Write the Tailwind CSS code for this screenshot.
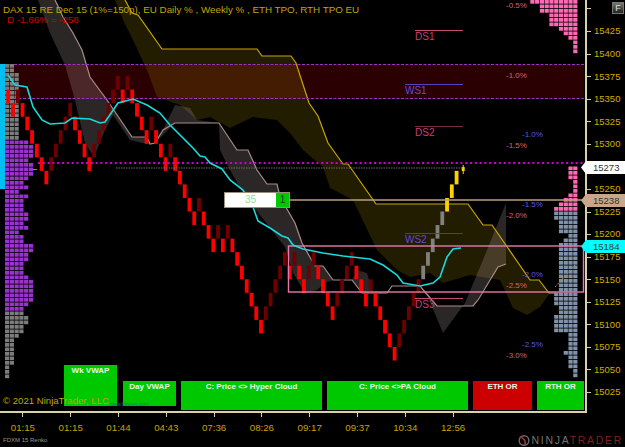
<!DOCTYPE html>
<html lang="en">
<head>
    <meta charset="UTF-8">
    <title>DAX 15 RE Dec 15</title>
    <script src="https://cdn.jsdelivr.net/npm/@tailwindcss/browser@4"></script>
</head>
<body class="bg-black">
    <div class="w-[625px] h-[447px] flex flex-col bg-black overflow-hidden font-['Liberation_Sans',Arial,sans-serif]">
        <div class="relative flex h-[413px] shrink-0">
            <!-- chart canvas -->
            <div class="relative w-[587px] h-[413px] shrink-0 border-r-[2px] border-b-[2px] border-[#d8d2a8]">
                <svg id="chart" class="absolute left-0 top-0" width="585" height="411" viewBox="0 0 585 411">
                    <rect x="5" y="64.5" width="579" height="34" fill="#2a0003" />
                    <polygon fill="#c8a800" fill-opacity="0.17" points="115,0 125,0 132,13 138,15 162,49 257,49 262,56 291,56 296,63 309,103 318,116 328,143 333,150 343,164 348,164 376,204 468,204 483,225 492,225 530,280 539,280 549,293 555,293 550,293 540,307 527,315 513,308 500,280 470,275 443,283 430,273 410,277 397,270 377,250 353,200 330,188 323,167 303,150 290,133 277,120 253,117 230,128 210,117 197,120 180,105 157,97 147,70 133,40 123,20" />
                    <g fill="#c8b0b0" fill-opacity="0.22">
                        <polygon points="38,0 55,0 63,17 73,33 82,50 90,77 107,100 132,137 147,137 150,144 143,143 130,140 113,115 105,130 94,157 85,143 75,100 65,65 50,33" />
                        <polygon points="155,143 163,130 175,105 190,108 197,120 219,123 175,123" />
                        <polygon points="219,123 237,150 248,150 257,170 267,184 277,184 280,197 295,223 302,243 315,266 323,266 333,280 325,283 317,290 305,293 293,273 285,247 243,193 230,170 220,150" />
                        <polygon points="352,280 357,270 367,273 373,293 362,293" />
                        <polygon points="425,290 437,306 473,306 498,267 506,264 506,203 485,255 465,303 443,333" />
                    </g>
                    <polyline fill="none" stroke="#c8a800" stroke-width="1.2" points="125,0 132,13 138,15 162,49 257,49 262,56 291,56 296,63 309,103 318,116 328,143 333,150 343,164 348,164 376,204 468,204 483,225 492,225 530,280 539,280 549,293 555,293" />
                    <polyline fill="none" stroke="#a88c8c" stroke-width="1.2" points="55,0 63,17 73,33 82,50 90,77 107,100 132,137 147,137 150,144 155,143 163,130 175,123 219,123 237,150 248,150 257,170 267,184 277,184 280,197 295,223 302,243 315,266 323,266 333,280 352,280 362,293 387,293 392,286 420,286 425,292 437,306 473,306 478,300 498,267 506,264" />
                    <line x1="5" y1="64.5" x2="584" y2="64.5" stroke="#a030c0" stroke-dasharray="3 1.5" />
                    <line x1="5" y1="98.5" x2="584" y2="98.5" stroke="#a030c0" stroke-dasharray="3 1.5" />
                    <g id="profiles"></g>
                    <g id="candles"></g>
                    <line x1="38" y1="163" x2="584" y2="163" stroke="#cc00cc" stroke-width="2" stroke-dasharray="2 2.8" />
                    <line x1="116" y1="168" x2="463" y2="168" stroke="#6a6a6a" stroke-dasharray="1.5 1" />
                    <line x1="33" y1="169.5" x2="37" y2="169.5" stroke="#a0a000" />
                    <line x1="289" y1="200" x2="584" y2="200" stroke="#b8a080" stroke-width="1.5" />
                    <rect x="288.5" y="246" width="295" height="46" fill="none" stroke="#e878a8" stroke-width="1.4" />
                    <line x1="555" y1="287" x2="575" y2="265" stroke="#a09030" stroke-dasharray="2 1.5" />
                    <polyline fill="none" stroke="#19d9dc" stroke-width="1.6" points="8,75 15,85 27,87 33,107 42,120 50,124 65,123 72,118 90,119 100,123 105,122 118,103 133,99 147,105 160,113 170,125 193,148 200,156 205,157 210,163 222,169 230,180 243,190 253,207 258,221 270,228 282,236 288,238 293,245 303,249 323,253 343,256 370,259 383,265 397,275 403,283 420,286 433,283 440,277 447,257 453,249 461,248" />
                </svg>

                <div class="absolute left-0 top-[64px] w-[5px] h-[125px] bg-[#00bff0]"></div>

                <p class="absolute left-[3px] top-[3px] text-[9.8px] leading-[13px] whitespace-nowrap text-[#c0a600]">DAX 15 RE Dec 15 (1%=150p), EU Daily % , Weekly % , ETH TPO, RTH TPO EU</p>
                <p class="absolute left-[7px] top-[13px] text-[9.8px] leading-[13px] whitespace-nowrap text-[#d40000]">D -1,66% = -258</p>

                <!-- session levels -->
                <span class="absolute left-[415px] top-[30px] w-[48px] border-t border-[#c04a7a] text-[10px] leading-[11px] text-[#d03a70]">DS1</span>
                <span class="absolute left-[405px] top-[84px] w-[58px] border-t border-[#5a3fc0] text-[10px] leading-[11px] text-[#6a48d0]">WS1</span>
                <span class="absolute left-[415px] top-[126px] w-[48px] border-t border-[#7a2a4a] text-[10px] leading-[11px] text-[#d03a70]">DS2</span>
                <span class="absolute left-[405px] top-[233px] w-[58px] border-t border-[#4a3a90] text-[10px] leading-[11px] text-[#6a48d0]">WS2</span>
                <span class="absolute left-[415px] top-[298px] w-[48px] border-t border-[#c04a7a] text-[10px] leading-[11px] text-[#d03a70]">DS3</span>

                <!-- percent levels -->
                <span class="absolute left-[506px] top-[1px] text-[8px] leading-[9px] text-[#d06478]">-0.5%</span>
                <span class="absolute left-[506px] top-[71px] text-[8px] leading-[9px] text-[#d06478]">-1.0%</span>
                <span class="absolute left-[506px] top-[141px] text-[8px] leading-[9px] text-[#d06478]">-1.5%</span>
                <span class="absolute left-[506px] top-[211px] text-[8px] leading-[9px] text-[#d06478]">-2.0%</span>
                <span class="absolute left-[506px] top-[281px] text-[8px] leading-[9px] text-[#d06478]">-2.5%</span>
                <span class="absolute left-[506px] top-[351px] text-[8px] leading-[9px] text-[#d06478]">-3.0%</span>
                <span class="absolute left-[522px] top-[130px] text-[8px] leading-[9px] text-[#5a58e0]">-1.0%</span>
                <span class="absolute left-[522px] top-[200px] text-[8px] leading-[9px] text-[#5a58e0]">-1.5%</span>
                <span class="absolute left-[522px] top-[270px] text-[8px] leading-[9px] text-[#5a58e0]">-2.0%</span>
                <span class="absolute left-[522px] top-[340px] text-[8px] leading-[9px] text-[#5a58e0]">-2.5%</span>

                <!-- position marker -->
                <div class="absolute left-[224px] top-[192px] flex h-[16px] border border-[#99907a]">
                    <span class="w-[51px] bg-white text-center text-[10px] leading-[14px] text-[#90e090]">35</span>
                    <span class="w-[13px] bg-[#00c800] text-center text-[10px] leading-[14px] text-[#104010]">1</span>
                </div>

                <!-- signal boxes -->
                <div class="absolute left-0 right-0 bottom-0 flex items-end gap-[5px] pl-[64px] text-center text-[8px] font-bold leading-[10px] text-[#e8f8e8]">
                    <div class="w-[53px] h-[41px] mb-[5px] pt-[1px] bg-[#00c800]">Wk VWAP</div>
                    <div class="ml-[1px] w-[53px] h-[25px] mb-[5px] pt-[1px] bg-[#00c800]">Day VWAP</div>
                    <div class="w-[141px] h-[29px] mb-[1px] pt-[1px] bg-[#00c800]">C: Price &lt;&gt; Hyper Cloud</div>
                    <div class="w-[141px] h-[29px] mb-[1px] pt-[1px] bg-[#00c800]">C: Price &lt;&gt;PA Cloud</div>
                    <div class="w-[59px] h-[29px] mb-[1px] pt-[1px] bg-[#cc0000]">ETH OR</div>
                    <div class="w-[47px] h-[29px] mb-[1px] pt-[1px] bg-[#00c800]">RTH OR</div>
                </div>

                <p class="absolute left-[3px] top-[395px] text-[9.6px] leading-[12px] whitespace-nowrap text-[#c0a600]">© 2021 NinjaTrader, LLC</p>
                <p class="absolute left-[110px] top-[401px] text-[5px] leading-[6px] whitespace-nowrap text-[#107090]">www.futures.com</p>
            </div>

            <!-- price axis -->
            <div class="relative flex-1 h-[412px] overflow-hidden">
                <div class="flex flex-col mt-[-2.3px] text-[9.5px] text-[#d4ac00]">
                    <div class="flex items-center gap-[3px] h-[22.57px]"><i class="block w-[4px] h-px bg-[#d8d2a8]"></i></div>
                    <div class="flex items-center gap-[3px] h-[22.57px]"><i class="block w-[4px] h-px bg-[#d8d2a8]"></i>15425</div>
                    <div class="flex items-center gap-[3px] h-[22.57px]"><i class="block w-[4px] h-px bg-[#d8d2a8]"></i>15400</div>
                    <div class="flex items-center gap-[3px] h-[22.57px]"><i class="block w-[4px] h-px bg-[#d8d2a8]"></i>15375</div>
                    <div class="flex items-center gap-[3px] h-[22.57px]"><i class="block w-[4px] h-px bg-[#d8d2a8]"></i>15350</div>
                    <div class="flex items-center gap-[3px] h-[22.57px]"><i class="block w-[4px] h-px bg-[#d8d2a8]"></i>15325</div>
                    <div class="flex items-center gap-[3px] h-[22.57px]"><i class="block w-[4px] h-px bg-[#d8d2a8]"></i>15300</div>
                    <div class="flex items-center gap-[3px] h-[22.57px]"><i class="block w-[4px] h-px bg-[#d8d2a8]"></i>15275</div>
                    <div class="flex items-center gap-[3px] h-[22.57px]"><i class="block w-[4px] h-px bg-[#d8d2a8]"></i>15250</div>
                    <div class="flex items-center gap-[3px] h-[22.57px]"><i class="block w-[4px] h-px bg-[#d8d2a8]"></i>15225</div>
                    <div class="flex items-center gap-[3px] h-[22.57px]"><i class="block w-[4px] h-px bg-[#d8d2a8]"></i>15200</div>
                    <div class="flex items-center gap-[3px] h-[22.57px]"><i class="block w-[4px] h-px bg-[#d8d2a8]"></i>15175</div>
                    <div class="flex items-center gap-[3px] h-[22.57px]"><i class="block w-[4px] h-px bg-[#d8d2a8]"></i>15150</div>
                    <div class="flex items-center gap-[3px] h-[22.57px]"><i class="block w-[4px] h-px bg-[#d8d2a8]"></i>15125</div>
                    <div class="flex items-center gap-[3px] h-[22.57px]"><i class="block w-[4px] h-px bg-[#d8d2a8]"></i>15100</div>
                    <div class="flex items-center gap-[3px] h-[22.57px]"><i class="block w-[4px] h-px bg-[#d8d2a8]"></i>15075</div>
                    <div class="flex items-center gap-[3px] h-[22.57px]"><i class="block w-[4px] h-px bg-[#d8d2a8]"></i>15050</div>
                    <div class="flex items-center gap-[3px] h-[22.57px]"><i class="block w-[4px] h-px bg-[#d8d2a8]"></i>15025</div>
                </div>
            </div>

            <!-- F button and price callouts sit over the axis -->
            <div class="absolute left-[612px] top-[2px] w-[12px] h-[12px] border border-[#777] bg-gradient-to-b from-[#777] to-[#222] text-center text-[9px] leading-[10px] text-[#ddd]">F</div>
            <div class="absolute left-[581px] top-[161px] w-[44px] h-[13px] bg-white text-[#333] text-[9.5px] leading-[13px] pl-[12px] [clip-path:polygon(0_50%,5px_0,100%_0,100%_100%,5px_100%)]">15273</div>
            <div class="absolute left-[581px] top-[194px] w-[44px] h-[13px] bg-[#c8a888] text-[#333] text-[9.5px] leading-[13px] pl-[12px] [clip-path:polygon(0_50%,5px_0,100%_0,100%_100%,5px_100%)]">15238</div>
            <div class="absolute left-[581px] top-[240px] w-[44px] h-[13px] bg-[#00ffff] text-[#333] text-[9.5px] leading-[13px] pl-[12px] [clip-path:polygon(0_50%,5px_0,100%_0,100%_100%,5px_100%)]">15184</div>
        </div>

        <!-- time axis -->
        <div class="flex ml-[-1px] h-[21px] text-[9.7px] leading-[12px] text-[#c8a200]">
            <div class="flex flex-col items-center w-[47.8px]"><i class="block w-px h-[4px] bg-[#d8d2a8]"></i><span class="mt-[5px]">01:15</span></div>
            <div class="flex flex-col items-center w-[47.8px]"><i class="block w-px h-[4px] bg-[#d8d2a8]"></i><span class="mt-[5px]">01:15</span></div>
            <div class="flex flex-col items-center w-[47.8px]"><i class="block w-px h-[4px] bg-[#d8d2a8]"></i><span class="mt-[5px]">01:44</span></div>
            <div class="flex flex-col items-center w-[47.8px]"><i class="block w-px h-[4px] bg-[#d8d2a8]"></i><span class="mt-[5px]">04:43</span></div>
            <div class="flex flex-col items-center w-[47.8px]"><i class="block w-px h-[4px] bg-[#d8d2a8]"></i><span class="mt-[5px]">07:36</span></div>
            <div class="flex flex-col items-center w-[47.8px]"><i class="block w-px h-[4px] bg-[#d8d2a8]"></i><span class="mt-[5px]">08:26</span></div>
            <div class="flex flex-col items-center w-[47.8px]"><i class="block w-px h-[4px] bg-[#d8d2a8]"></i><span class="mt-[5px]">09:17</span></div>
            <div class="flex flex-col items-center w-[47.8px]"><i class="block w-px h-[4px] bg-[#d8d2a8]"></i><span class="mt-[5px]">09:37</span></div>
            <div class="flex flex-col items-center w-[47.8px]"><i class="block w-px h-[4px] bg-[#d8d2a8]"></i><span class="mt-[5px]">10:34</span></div>
            <div class="flex flex-col items-center w-[47.8px]"><i class="block w-px h-[4px] bg-[#d8d2a8]"></i><span class="mt-[5px]">12:56</span></div>
        </div>

        <!-- footer -->
        <div class="flex items-center justify-between h-[13px] pl-[3px] pr-[2px]">
            <span class="text-[6px] text-[#999]">FDXM 15 Renko</span>
            <div class="flex items-center gap-[1px]">
                <svg width="14" height="11" viewBox="0 0 14 11">
                    <circle cx="7" cy="5.5" r="4.8" fill="none" stroke="#6a6a6a" stroke-width="1.4" />
                    <path d="M3 2 C7 3 9 6 8 10" fill="none" stroke="#a03030" stroke-width="1.8" />
                </svg>
                <span class="text-[10.5px] leading-[11px] tracking-[1.7px] whitespace-nowrap text-[#747474]">NINJA<span class="text-[#7e2020]">TRADER</span></span>
            </div>
        </div>
    </div>

    <script>
        // rows are 15 point bricks, B falling, D rising, G grey, Y yellow
        const bricks = "1B 2B 1D 2B 3B 4B 5B 6B 7B 6D 5D 4D 3D 2D 3B 4B 5B 6B 5D 4D 3D 2D 1D 0D 1B 0D 1B 2B 3B 4B 3D 4B 5B 6B 5D 6B 7B 8B 9B 10B 9D 10B 11B 12B 11D 12B 11D 12B 13B 14B 15B 16B 17B 18B 17D 16D 15D 14D 13D 14B 13D 14B 15B 14D 13D 14B 15B 16B 17B 16D 15D 14D 13D 14B 15B 16B 15D 16B 17B 18B 19B 20B 19D 18D 17D 16D 15D 14G 13G 12G 11G 10G 9Y 8Y 7Y".split(" ");
        const brickColors = { B: "#ff0000", D: "#6e0000", G: "#808080", Y: "#ffd000" };
        const ns = "http://www.w3.org/2000/svg";

        function addRect(parent, x, y, w, h, fill) {
            const r = document.createElementNS(ns, "rect");
            r.setAttribute("x", x);
            r.setAttribute("y", y);
            r.setAttribute("width", w);
            r.setAttribute("height", h);
            r.setAttribute("fill", fill);
            parent.appendChild(r);
        }

        const candles = document.getElementById("candles");
        bricks.forEach((b, i) => {
            const row = parseInt(b);
            const kind = b[b.length - 1];
            addRect(candles, 6.3 + 4.77 * i, 76 + 13.55 * row, 3.8, 13.55, brickColors[kind]);
        });
        addRect(candles, 461.7, 167, 3, 4, "#ffd000");
        addRect(candles, 462.7, 165, 1, 9, "#ffd000");

        // volume profiles: to y, edge x, rows sit on one 4.5px grid
        const leftProfile = [
            [69, 14], [137, 18], [145, 28], [155, 32], [160, 28], [176, 33], [178, 28], [184, 23], [186, 28],
            [194, 18], [198, 28], [209, 23], [221, 28], [225, 23], [229, 28], [233, 18], [242, 23], [250, 33],
            [260, 28], [275, 23], [280, 28], [300, 33], [303, 28], [315, 23], [323, 28], [333, 23], [338, 18],
            [363, 14], [375, 9]
        ];
        const rightProfile = [
            [2, 532], [10, 540], [13, 545], [20, 548], [26, 550], [30, 559], [35, 564], [38, 569], [50, 574],
            [165, 999], [176, 569], [193, 574], [197, 569], [201, 564], [205, 560], [220, 555], [233, 560],
            [238, 569], [240, 564], [248, 560], [250, 555], [290, 558], [303, 555], [315, 560], [330, 555],
            [333, 560], [350, 569], [355, 565], [365, 569], [375, 574]
        ];
        const profiles = document.getElementById("profiles");
        for (let y = 64; y < 375; y += 4.5) {
            const seg = leftProfile.find(s => y < s[0]);
            const color = y >= 137 && y < 310 ? "#9a32cd" : "#7c7c7c";
            for (let x = 5; x < seg[1] - 1; x += 4.77) addRect(profiles, x, y, 4.2, 3.7, color);
        }
        for (let y = 0; y < 375; y += 4.5) {
            const seg = rightProfile.find(s => y < s[0]);
            const color = y < 210 ? "#ff69b4" : "#7f92aa";
            for (let x = 578 - 4.77; x > seg[1] - 2; x -= 4.77) addRect(profiles, x, y, 4.2, 3.7, color);
        }
    </script>
</body>
</html>
